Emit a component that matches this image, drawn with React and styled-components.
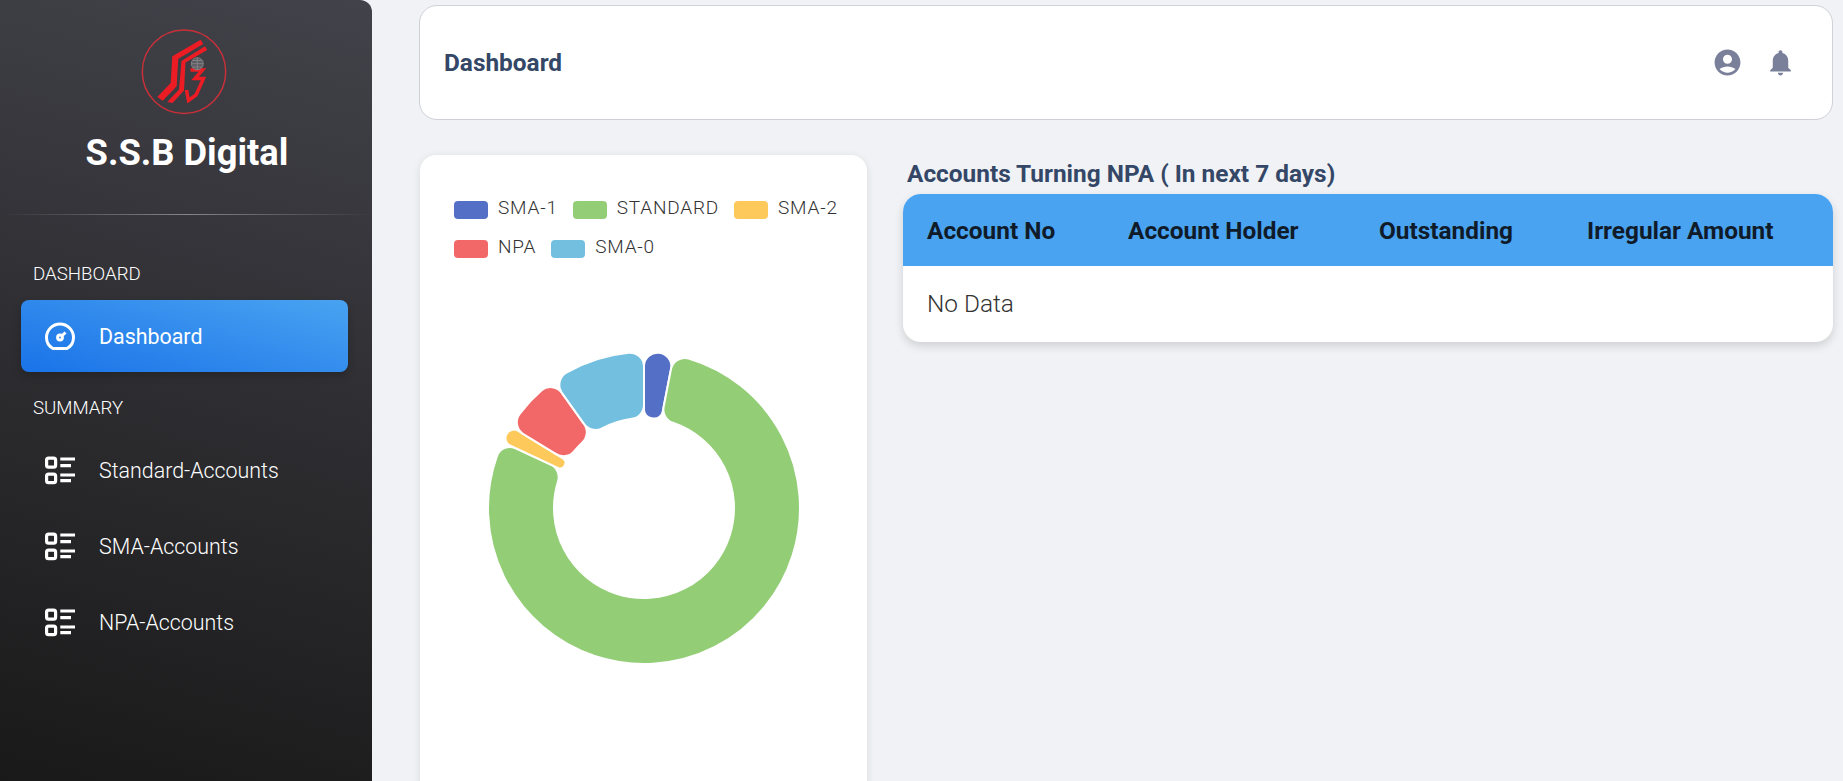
import React from "react";
import styled, { createGlobalStyle } from "styled-components";

const GlobalStyle = createGlobalStyle`
  html, body {
    margin: 0;
    padding: 0;
    height: 781px;
    overflow: hidden;
    background: #f0f2f5;
    font-family: Roboto, "Liberation Sans", sans-serif;
  }
`;

const Page = styled.div`
  display: flex;
  height: 781px;
  overflow: hidden;
`;

const Sidebar = styled.aside`
  flex: 0 0 372px;
  height: 781px;
  box-sizing: border-box;
  padding-top: 29px;
  background: linear-gradient(195deg, #42424a, #191919);
  border-top-right-radius: 12px;
`;

const Brand = styled.div`
  display: flex;
  flex-direction: column;
  align-items: center;

  svg {
    margin-right: 4px;
  }
`;

const BrandName = styled.div`
  margin: 18px 0 0 2px;
  font-size: 36.3px;
  line-height: 40px;
  font-weight: 700;
  color: #fff;
`;

const Divider = styled.div`
  height: 1px;
  margin-top: 41px;
  background: linear-gradient(to right, rgba(255,255,255,0), rgba(255,255,255,.4), rgba(255,255,255,0));
`;

const SectionLabel = styled.div`
  margin: ${p => p.$top}px 0 14px 33px;
  height: 24px;
  line-height: 24px;
  font-size: 18.7px;
  font-weight: 300;
  color: #fff;
`;

const NavItem = styled.div`
  display: flex;
  align-items: center;
  height: 72px;
  margin: 4px 24px 0 21px;
  padding-left: 24px;
  border-radius: 8px;
  color: #fff;
  font-size: 21.4px;
  font-weight: ${p => (p.$active ? 400 : 300)};
  background: ${p => (p.$active ? "linear-gradient(195deg, #49a3f1, #1a73e8)" : "transparent")};
  box-shadow: ${p => (p.$active ? "0 4px 8px rgba(0,0,0,.2)" : "none")};

  svg {
    flex: 0 0 30px;
    margin-right: 24px;
  }
`;

const FirstNavItem = styled(NavItem)`
  margin-top: 0;
`;

const Main = styled.main`
  flex: 1;
  min-width: 0;
  padding: 5px 10px 0 47px;
`;

const TopBar = styled.header`
  display: flex;
  align-items: center;
  justify-content: space-between;
  box-sizing: border-box;
  height: 115px;
  padding: 0 36px 0 24px;
  background: #fff;
  border: 1px solid #cfd0d8;
  border-radius: 18px;
`;

const PageTitle = styled.h1`
  margin: 0;
  font-size: 24.4px;
  font-weight: 700;
  color: #344767;
`;

const TopIcons = styled.div`
  display: flex;
  align-items: center;
  gap: 22px;
  color: #7b809a;

  svg {
    display: block;
  }
`;

const Content = styled.div`
  display: flex;
  align-items: flex-start;
  margin: 35px 0 0 1px;
  gap: 36px;
`;

const ChartCard = styled.section`
  flex: 0 0 447px;
  box-sizing: border-box;
  height: 700px;
  padding: 35px 0 0 34px;
  background: #fff;
  border-radius: 16px;
  box-shadow: 0 2px 8px rgba(0,0,0,.1);
`;

const Legend = styled.ul`
  display: flex;
  flex-wrap: wrap;
  gap: 0 15px;
  margin: 0;
  padding: 0;
  list-style: none;
`;

const LegendItem = styled.li`
  display: flex;
  align-items: center;
  height: 39px;
  gap: 10px;
  font-size: 19px;
  font-weight: 300;
  letter-spacing: .8px;
  color: #333;
`;

const LegendLabel = styled.span`
  margin-bottom: 5px;
`;

const Swatch = styled.span`
  width: 34px;
  height: 18px;
  border-radius: 4px;
  background: ${p => p.$color};
`;

const Donut = styled.svg`
  display: block;
  margin: 80px 0 0 30px;
`;

const TableArea = styled.section`
  flex: 1;
  min-width: 0;
`;

const TableTitle = styled.h2`
  margin: 3px 0 4px 4px;
  line-height: 32px;
  font-size: 24.4px;
  font-weight: 700;
  color: #344767;
`;

const TableBox = styled.div`
  overflow: hidden;
  border-radius: 18px;
  background: #fff;
  box-shadow: 0 4px 10px rgba(0,0,0,.14);
`;

const TableHead = styled.div`
  display: flex;
  align-items: center;
  height: 72px;
  background: #49a3f1;
`;

const HeadCell = styled.div`
  flex: 0 0 ${p => p.$width}px;
  padding-left: 24px;
  box-sizing: border-box;
  font-size: 24.4px;
  font-weight: 700;
  color: #101b2a;
`;

const EmptyRow = styled.div`
  height: 76px;
  padding-left: 24px;
  line-height: 76px;
  font-size: 24.4px;
  font-weight: 300;
  color: #333;
`;

const LOGO_RED = "#ec1c24";

const Logo = () => (
  <svg width="86" height="86" viewBox="0 0 86 86" fill="none">
    <circle cx="43" cy="42.7" r="41.7" stroke="#c8303a" strokeWidth="1.5" />
    <path d="M16.3 68 29.7 54 31.3 27.3 59.7 10.7 62.3 15 37.3 29.7 35.7 57.3 21.7 71.7Z" fill={LOGO_RED} />
    <path d="M26.3 73 38 60.5 40.5 32 64 17.3 66.2 21 44.5 33.5 43 61.5 31.5 74Z" fill={LOGO_RED} />
    <path d="M49.5 41H61.5L54 49.5H62.5L55 66 47.5 71.5 45.5 61" stroke={LOGO_RED} strokeWidth="3.5" />
    <g stroke="#8a8a8e" strokeWidth=".8">
      <circle cx="56.3" cy="34.7" r="6" fill="#5c5c62" />
      <path d="M50.3 34.7H62.3M56.3 28.7V40.7M51.5 31.5H61M51.5 38H61" />
    </g>
  </svg>
);

const GaugeIcon = () => (
  <svg width="30" height="30" viewBox="0 0 30 30" fill="none" stroke="#fff" strokeWidth="3">
    <path d="M8 27.5 C3.8 25.2 1.5 21 1.5 16.5 A13.5 13.5 0 0 1 28.5 16.5 C28.5 21 26.2 25.2 22 27.5 Z" strokeLinejoin="round" />
    <circle cx="15" cy="16.5" r="2.4" />
    <path d="M17.2 14.5 L20.5 11.5" />
  </svg>
);

const ListIcon = () => (
  <svg width="30" height="30" viewBox="0 0 30 30" fill="none" stroke="#fff" strokeWidth="3.2">
    <rect x="1.6" y="3.2" width="9" height="9" rx="2" />
    <rect x="1.6" y="19.1" width="9" height="8.6" rx="2" />
    <path d="M15.3 4H30M15.3 10.7H26M15.3 20H30M15.3 25.7H26" />
  </svg>
);

const UserIcon = () => (
  <svg width="31" height="31" viewBox="0 0 24 24" fill="currentColor">
    <path d="M12 2C6.48 2 2 6.48 2 12s4.48 10 10 10 10-4.48 10-10S17.52 2 12 2zm0 4c1.93 0 3.5 1.57 3.5 3.5S13.93 13 12 13s-3.5-1.57-3.5-3.5S10.07 6 12 6zm0 14c-2.03 0-4.43-.82-6.14-2.88C7.55 15.8 9.68 15 12 15s4.45.8 6.14 2.12C16.43 19.18 14.03 20 12 20z" />
  </svg>
);

const BellIcon = () => (
  <svg width="31" height="31" viewBox="0 0 24 24" fill="currentColor">
    <path d="M12 22c1.1 0 2-.9 2-2h-4c0 1.1.9 2 2 2zm6-6v-5c0-3.07-1.63-5.64-4.5-6.32V4c0-.83-.67-1.5-1.5-1.5s-1.5.67-1.5 1.5v.68C7.64 5.36 6 7.92 6 11v5l-2 2v1h16v-1l-2-2z" />
  </svg>
);

const CX = 160;
const CY = 160;
const OUTER = 156;
const INNER = 90;

// rounded ring segment, angles in degrees clockwise from the top
function segmentPath(fromDeg, toDeg, radius) {
  const start = ((fromDeg - 90) * Math.PI) / 180;
  const end = ((toDeg - 90) * Math.PI) / 180;
  const delta = end - start;
  const half = (OUTER - INNER) / 2;
  const innerLimit = Math.min(half, (delta * INNER) / 2);
  const outerArc = ((OUTER - Math.min(half, radius)) * delta) / 2;
  const ro = Math.min(radius, half, outerArc);
  const ri = Math.min(radius, innerLimit);
  const pt = (r, a) => `${(CX + r * Math.cos(a)).toFixed(2)} ${(CY + r * Math.sin(a)).toFixed(2)}`;
  const angO = ro / (OUTER - ro);
  const angI = ri / (INNER + ri);
  const large = delta > Math.PI ? 1 : 0;
  return [
    `M${pt(OUTER, start + angO)}`,
    `A${OUTER} ${OUTER} 0 ${large} 1 ${pt(OUTER, end - angO)}`,
    `A${ro} ${ro} 0 0 1 ${pt(OUTER - ro, end)}`,
    `L${pt(INNER + ri, end)}`,
    `A${ri} ${ri} 0 0 1 ${pt(INNER, end - angI)}`,
    `A${INNER} ${INNER} 0 ${large} 0 ${pt(INNER, start + angI)}`,
    `A${ri} ${ri} 0 0 1 ${pt(INNER + ri, start)}`,
    `L${pt(OUTER - ro, start)}`,
    `A${ro} ${ro} 0 0 1 ${pt(OUTER, start + angO)}`,
    "Z",
  ].join(" ");
}

const legend = [
  { label: "SMA-1", color: "#5470c6" },
  { label: "STANDARD", color: "#93ce77" },
  { label: "SMA-2", color: "#fdc95b" },
  { label: "NPA", color: "#f26868" },
  { label: "SMA-0", color: "#73bfdf" },
];

const segments = [
  { from: 0, to: 11, color: "#5470c6" },
  { from: 11, to: 295, color: "#93ce77" },
  { from: 295, to: 301.5, color: "#fdc95b" },
  { from: 301.5, to: 324.5, color: "#f26868" },
  { from: 324.5, to: 360, color: "#73bfdf" },
];

const columns = [
  { label: "Account No", width: 201 },
  { label: "Account Holder", width: 251 },
  { label: "Outstanding", width: 208 },
  { label: "Irregular Amount", width: 268 },
];

export default function App() {
  return (
    <Page>
      <GlobalStyle />
      <Sidebar>
        <Brand>
          <Logo />
          <BrandName>S.S.B Digital</BrandName>
        </Brand>
        <Divider />
        <SectionLabel $top={47}>DASHBOARD</SectionLabel>
        <FirstNavItem $active>
          <GaugeIcon />
          Dashboard
        </FirstNavItem>
        <SectionLabel $top={24}>SUMMARY</SectionLabel>
        <FirstNavItem><ListIcon />Standard-Accounts</FirstNavItem>
        <NavItem><ListIcon />SMA-Accounts</NavItem>
        <NavItem><ListIcon />NPA-Accounts</NavItem>
      </Sidebar>
      <Main>
        <TopBar>
          <PageTitle>Dashboard</PageTitle>
          <TopIcons>
            <UserIcon />
            <BellIcon />
          </TopIcons>
        </TopBar>
        <Content>
          <ChartCard>
            <Legend>
              {legend.map(item => (
                <LegendItem key={item.label}>
                  <Swatch $color={item.color} />
                  <LegendLabel>{item.label}</LegendLabel>
                </LegendItem>
              ))}
            </Legend>
            <Donut width="320" height="320" viewBox="0 0 320 320">
              {segments.map(s => (
                <path
                  key={s.color}
                  d={segmentPath(s.from, s.to, 14)}
                  fill={s.color}
                  stroke="#fff"
                  strokeWidth="2"
                />
              ))}
            </Donut>
          </ChartCard>
          <TableArea>
            <TableTitle>Accounts Turning NPA ( In next 7 days)</TableTitle>
            <TableBox>
              <TableHead>
                {columns.map(c => (
                  <HeadCell key={c.label} $width={c.width}>{c.label}</HeadCell>
                ))}
              </TableHead>
              <EmptyRow>No Data</EmptyRow>
            </TableBox>
          </TableArea>
        </Content>
      </Main>
    </Page>
  );
}
